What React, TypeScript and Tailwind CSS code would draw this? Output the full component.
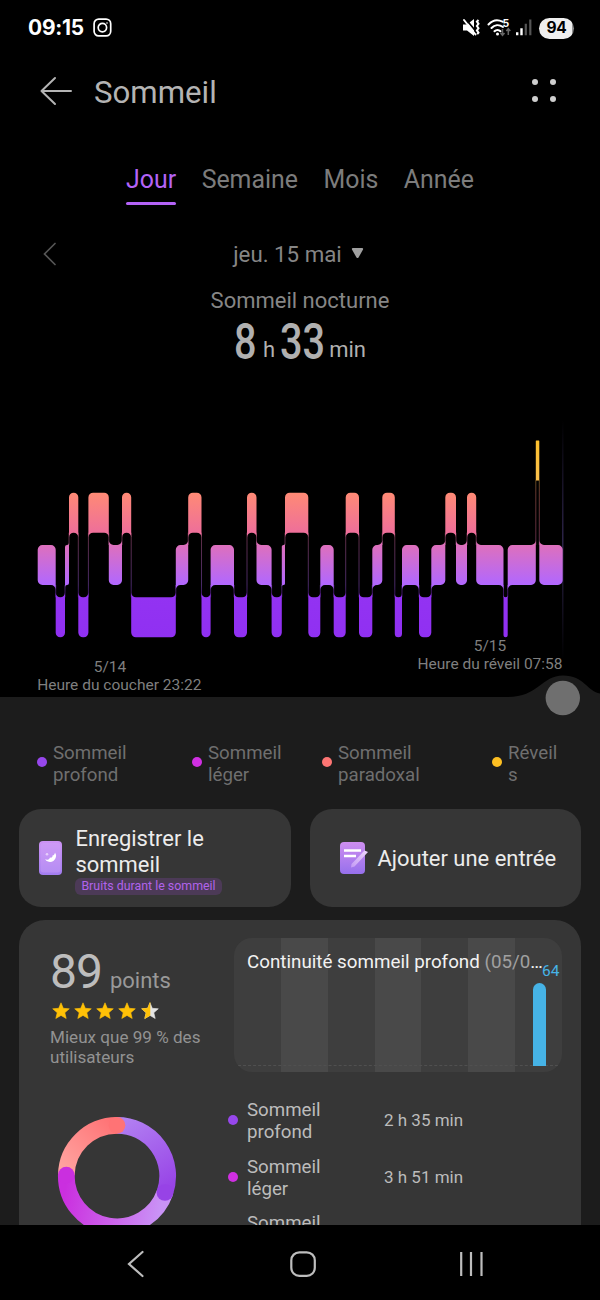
type Stage = "awake" | "rem" | "light" | "deep"

// Order matters: 0 is drawn highest
const LEVELS: Record<Stage, { rank: number; top: number }> = {
    awake: { rank: 0, top: 20.5 },
    rem: { rank: 1, top: 72.7 },
    light: { rank: 2, top: 125 },
    deep: { rank: 3, top: 177.3 },
}

const BLOCK_HEIGHT = 40

// [stage, x where the block ends]
const NIGHT: [Stage, number][] = [
    ["light", 55.7], ["deep", 65], ["light", 69], ["rem", 78.3], ["deep", 88.4],
    ["rem", 108.8], ["light", 122], ["rem", 131.2], ["deep", 175.8], ["light", 188.2],
    ["rem", 201.5], ["deep", 210.6], ["light", 234], ["deep", 247], ["rem", 256.5],
    ["light", 271.6], ["deep", 281.8], ["light", 285], ["rem", 308.3], ["deep", 320.3],
    ["light", 333.7], ["deep", 345.7], ["rem", 359], ["deep", 372.3], ["light", 382.3],
    ["rem", 394.8], ["deep", 402], ["light", 419], ["deep", 431.3], ["light", 445.3],
    ["rem", 456], ["light", 467], ["rem", 476.2], ["light", 503.5], ["deep", 507.7],
    ["light", 535.8], ["awake", 539.3], ["light", 562.7],
]

const NIGHT_START = 37.7

const TABS = ["Jour", "Semaine", "Mois", "Année"]

const LEGEND = [
    { lines: ["Sommeil", "profond"], dot: "bg-[#9747ec]" },
    { lines: ["Sommeil", "léger"], dot: "bg-[#d02fe2]" },
    { lines: ["Sommeil", "paradoxal"], dot: "bg-[#fd7573]" },
    { lines: ["Réveil", "s"], dot: "bg-[#fdbf22]" },
]

const DETAILS = [
    { lines: ["Sommeil", "profond"], dot: "bg-[#9747ec]", value: "2 h 35 min" },
    { lines: ["Sommeil", "léger"], dot: "bg-[#d02fe2]", value: "3 h 51 min" },
    { lines: ["Sommeil", "paradoxal"], dot: "bg-[#fd7573]", value: "2 h 7 min" },
]

function blockPath(x0: number, x1: number, stage: Stage, prev?: Stage, next?: Stage) {
    const { rank, top } = LEVELS[stage]
    const bottom = top + BLOCK_HEIGHT
    const r = stage === "awake" ? 0.5 : Math.min(4.7, (x1 - x0) / 2)
    const above = (s?: Stage) => s !== undefined && LEVELS[s].rank < rank
    const below = (s?: Stage) => s !== undefined && LEVELS[s].rank > rank
    // a corner that faces its neighbour flares out instead of rounding in
    const tl = above(prev) ? top - r : top + r
    const tr = above(next) ? top - r : top + r
    const bl = below(prev) ? bottom + r : bottom - r
    const br = below(next) ? bottom + r : bottom - r
    const corner = (x: number, y: number, flip: boolean) => `A${r} ${r} 0 0 ${flip ? 0 : 1} ${x} ${y}`
    return [
        `M${x0} ${tl}`,
        corner(x0 + r, top, above(prev)),
        `H${x1 - r}`,
        corner(x1, tr, above(next)),
        `V${br}`,
        corner(x1 - r, bottom, below(next)),
        `H${x0 + r}`,
        corner(x0, bl, below(prev)),
        "Z",
    ].join("")
}

function StatusBar() {
    return (
        <div className="flex h-14 items-center justify-between pl-[28px] pr-[26px] text-white">
            <div className="flex items-center gap-[9px]">
                <span className="font-['Inter'] text-[20.9px] font-bold tracking-[-0.2px]">09:15</span>
                <svg width="19" height="19" viewBox="0 0 19 19" fill="none" stroke="currentColor" strokeWidth="1.7">
                    <rect x="1.1" y="1.1" width="16.6" height="16.8" rx="4.6" />
                    <circle cx="9.4" cy="9.6" r="4.2" />
                    <circle cx="14" cy="5" r="0.8" fill="currentColor" stroke="none" />
                </svg>
            </div>
            <div className="flex items-center">
                <svg width="77" height="22" viewBox="0 0 77 22" fill="none">
                    {/* muted speaker, vibrating */}
                    <path d="M1 7.500h4l7-5.500v17l-7-5.500H1z" fill="#fff" />
                    <path d="M3.500 1.700l12 14.500" stroke="#000" strokeWidth="1.800" />
                    <path d="M2 3l11.500 14.500" stroke="#fff" strokeWidth="2" strokeLinecap="round" />
                    <path d="M16.500 3l-1.600 1.600 1.600 2.200-1.600 2.200 1.600 2.200-1.600 2.200 1.600 2.200-1.300 1.600" stroke="#fff" strokeWidth="2" />
                    {/* wifi */}
                    <path d="M26.500 7.500c4-4.300 9.500-5 14-2.800M29.500 11c3-3.300 7.500-3.700 11.500-1M32.500 14.300c1.700-1.800 4.200-1.800 6 0" stroke="#fff" strokeWidth="2" strokeLinecap="round" />
                    <circle cx="35.500" cy="17" r="1.500" fill="#fff" />
                    <text x="40.500" y="10" fill="#fff" fontSize="10.500" fontWeight="700" fontFamily="Inter">5</text>
                    <path d="M40.500 12v6M38.500 16l2 2.300 2-2.300M46.300 18v-6M44.300 14l2-2.300 2 2.300" stroke="#666" strokeWidth="1.500" />
                    {/* signal */}
                    <path d="M55.200 18.300v-3M59.500 18.300v-7" stroke="#fff" strokeWidth="2.400" />
                    <path d="M63.800 18.300v-11.500M68.300 18.300V2.500" stroke="#555" strokeWidth="2.200" />
                </svg>
                <div className="flex h-[21px] w-[35px] items-center justify-center rounded-full bg-[linear-gradient(90deg,#efefef_94%,#8f8f8f_94%)] font-['Inter'] text-[15.500px] font-bold tracking-[-0.300px] text-black">
                    94
                </div>
            </div>
        </div>
    )
}

function Header() {
    return (
        <header className="flex h-[72px] items-center pl-10 pr-11 text-[#b4b4b4]">
            <svg className="mb-0.5" width="33" height="30" viewBox="0 0 33 30" fill="none" stroke="currentColor" strokeWidth="2" strokeLinecap="round">
                <path d="M1.500 15H31M15 2L1.500 15L15 28" strokeLinejoin="round" />
            </svg>
            <h1 className="ml-[21px] mt-px text-[31.200px] leading-none">Sommeil</h1>
            <div className="ml-auto mb-[3px] grid grid-cols-2 gap-x-3 gap-y-[11px]">
                {[0, 1, 2, 3].map((i) => (
                    <span key={i} className="size-1.5 rounded-full bg-[#cfcfcf]" />
                ))}
            </div>
        </header>
    )
}

function Tabs() {
    return (
        <nav className="flex h-[77px] justify-center gap-[25.500px] pt-[37px] text-[24.900px] leading-[30px] text-[#7c7c7c]">
            {TABS.map((tab, i) => (
                <div key={tab} className={i === 0 ? "text-[#b463f7]" : ""}>
                    {tab}
                    {i === 0 && <div className="mt-[7px] h-[3px] rounded-full bg-[#b463f7]" />}
                </div>
            ))}
        </nav>
    )
}

function NightSummary() {
    return (
        <section className="flex h-[215px] flex-col items-center text-[#868686]">
            <div className="grid h-[97px] w-full grid-cols-[1fr_auto_1fr] items-center">
                <svg className="ml-[43px]" width="14" height="24" viewBox="0 0 14 24" fill="none" stroke="#555" strokeWidth="1.700" strokeLinecap="round">
                    <path d="M12 1.500L1.500 12L12 22.500" />
                </svg>
                <div className="mr-[3px] mt-0.5 flex items-center gap-[9px] text-[22.300px]">
                    jeu. 15 mai
                    <svg className="mb-[3px]" width="13" height="11" viewBox="0 0 13 11" fill="#a0a0a0">
                        <path d="M2 0h9q1.600 0 1 1.500L7.500 9.500q-1 1.200-2 0L1 1.500Q.4 0 2 0z" />
                    </svg>
                </div>
            </div>
            <p className="-mt-[15px] text-[22px] leading-7">Sommeil nocturne</p>
            <div className="-mt-px flex items-baseline text-[22px] leading-[56px] text-[#b0b0b0]">
                <span className="w-[23px] origin-left scale-x-[0.800] text-[49.500px] font-medium">8</span>
                <span className="mb-0.5 ml-[6px] mr-[5px] -translate-y-[2px]">h</span>
                <span className="w-[45px] origin-left scale-x-[0.800] text-[49.500px] font-medium">33</span>
                <span className="ml-[4px] -translate-y-[2px]">min</span>
            </div>
        </section>
    )
}

function SleepChart() {
    const blocks = NIGHT.map(([stage, end], i) => ({
        stage,
        end,
        start: i === 0 ? NIGHT_START : NIGHT[i - 1][1],
        prev: NIGHT[i - 1]?.[0],
        next: NIGHT[i + 1]?.[0],
    }))

    return (
        <svg className="relative z-10 block shrink-0 overflow-visible" width="600" height="277" viewBox="0 0 600 277">
            <defs>
                <linearGradient id="stages" gradientUnits="userSpaceOnUse" x1="0" y1="20" x2="0" y2="217">
                    <stop offset="0" stopColor="#fdc02c" />
                    <stop offset="0.200" stopColor="#fbc04c" />
                    <stop offset="0.268" stopColor="#ff8a75" />
                    <stop offset="0.470" stopColor="#ee6f9a" />
                    <stop offset="0.535" stopColor="#dd70bd" />
                    <stop offset="0.735" stopColor="#b167ff" />
                    <stop offset="0.780" stopColor="#9333f2" />
                    <stop offset="1" stopColor="#9030f2" />
                </linearGradient>
                <linearGradient id="cursor" x1="0" y1="0" x2="0" y2="1">
                    <stop offset="0" stopColor="#2c2348" stopOpacity="0" />
                    <stop offset="0.500" stopColor="#2c2348" />
                    <stop offset="1" stopColor="#2c2348" stopOpacity="0" />
                </linearGradient>
            </defs>

            <rect x="562" y="0" width="1.500" height="240" fill="url(#cursor)" />

            {blocks.slice(1).map((b) => {
                const a = LEVELS[b.prev].top
                const c = LEVELS[b.stage].top
                const y = Math.min(a, c) + BLOCK_HEIGHT
                return <rect key={b.start} x={b.start - 0.5} y={y} width="1" height={Math.max(a, c) - y} fill="url(#stages)" opacity="0.400" />
            })}
            {blocks.map((b) => (
                <path key={b.start} d={blockPath(b.start, b.end, b.stage, b.prev, b.next)} fill="url(#stages)" />
            ))}

            <g fill="#7f7f7f" fontSize="15.500" textAnchor="middle">
                <text x="110" y="251.500">5/14</text>
                <text x="119.300" y="270">Heure du coucher 23:22</text>
                <text x="490" y="230.500">5/15</text>
                <text x="490" y="249">Heure du réveil 07:58</text>
            </g>

            {/* sheet edge rising round the drag handle */}
            <path d="M508 277C538 277 542 255.500 563 255.500S588 272 600 273.500V278H508z" fill="#1c1c1c" />
            <circle cx="562.800" cy="278" r="17.200" fill="#6f6f6f" />
        </svg>
    )
}

function Legend() {
    return (
        <div className="grid h-[112px] grid-cols-[155px_130px_170px_auto] pl-[37px] pt-[44px] text-[18.700px] leading-[22px] text-[#6f6f6f]">
            {LEGEND.map((item) => (
                <div key={item.lines.join()} className="flex h-11 items-center gap-[6px]">
                    <span className={`mt-[-2px] size-2.5 rounded-full ${item.dot}`} />
                    <p className="mt-px">
                        {item.lines[0]}
                        <br />
                        {item.lines[1]}
                    </p>
                </div>
            ))}
        </div>
    )
}

function Actions() {
    return (
        <div className="grid h-[98px] grid-cols-2 gap-[19px] px-[19px] text-[21.950px] text-[#ececec]">
            <div className="flex items-center rounded-[22px] bg-[#363636] pl-5">
                <svg width="23" height="34" viewBox="0 0 23 34">
                    <defs>
                        <linearGradient id="phone" x1="0" y1="0" x2="0" y2="1">
                            <stop offset="0" stopColor="#cd93f4" />
                            <stop offset="1" stopColor="#a27df0" />
                        </linearGradient>
                    </defs>
                    <rect width="23" height="34" rx="4" fill="url(#phone)" />
                    <rect x="1.500" y="2" width="20" height="29.500" rx="3" fill="#d3aaf8" opacity="0.350" />
                    <path d="M16 11.500A6 6 0 1 1 6 18.300C8 19.300 10.300 18.800 11 16.500C12.500 17 13.800 16 13.500 14.500C15 14.300 15.800 13 16 11.500Z" fill="#fff" />
                    <circle cx="8" cy="13.300" r="1.300" fill="#efdcfd" opacity="0.800" />
                </svg>
                <div className="ml-[13px] mt-[4px]">
                    <p className="pl-[0.500px] leading-[26px]">
                        Enregistrer le
                        <br />
                        sommeil
                    </p>
                    <p className="flex h-[17px] w-[147px] items-center justify-center rounded-md bg-[#4c3a57] pt-px text-[12.400px] leading-none text-[#b163ea]">
                        Bruits durant le sommeil
                    </p>
                </div>
            </div>
            <div className="flex items-center rounded-[22px] bg-[#363636] pl-[30px]">
                <svg width="28" height="32" viewBox="0 0 28 32">
                    <defs>
                        <linearGradient id="note" x1="0" y1="0" x2="0" y2="1">
                            <stop offset="0" stopColor="#ce8ef0" />
                            <stop offset="1" stopColor="#9670ec" />
                        </linearGradient>
                        <linearGradient id="pen" x1="1" y1="0" x2="0" y2="1">
                            <stop offset="0" stopColor="#eed8fc" />
                            <stop offset="1" stopColor="#c39af5" />
                        </linearGradient>
                    </defs>
                    <rect width="25" height="32" rx="4" fill="url(#note)" />
                    <path d="M4 8.500h17M4 14h12" stroke="#fff" strokeWidth="2.300" />
                    <path d="M24.500 8.500l3.500 1.500L14.500 24.500l-3.500 1 .5-3.500z" fill="url(#pen)" />
                </svg>
                <p className="ml-[10px] mt-0.5 whitespace-nowrap">Ajouter une entrée</p>
            </div>
        </div>
    )
}

function Star({ half = false }: { half?: boolean }) {
    const d = "M9 .8l2.300 5.500 6 .5-4.500 3.900 1.400 5.800L9 13.400l-5.200 3.100 1.400-5.800L.7 6.800l6-.5z"
    return (
        <svg width="18" height="18" viewBox="0 0 18 18" strokeLinejoin="round" strokeWidth="0.600">
            <path d={d} fill={half ? "#e4e4e4" : "#ffc107"} stroke={half ? "#e4e4e4" : "#ffc107"} />
            {half && <path d="M9 .5v12.900l-5.200 3.100 1.400-5.800L.7 6.800l6-.5z" fill="#ffc107" stroke="#ffc107" />}
        </svg>
    )
}

function Continuity() {
    return (
        <div className="relative h-[134px] w-[328px] overflow-hidden rounded-[18px] bg-[#3e3e3e]">
            <div className="grid h-full grid-cols-7">
                {[0, 1, 2, 3, 4, 5, 6].map((i) => (
                    <div key={i} className={i % 2 ? "bg-[#494949]" : ""} />
                ))}
            </div>
            <div className="absolute inset-x-1 top-[127px] border-t border-dashed border-[#505050]" />
            <p className="absolute left-[13px] top-3 w-[296px] truncate text-[18.800px] leading-6 text-[#f2f2f2]">
                Continuité sommeil profond <span className="text-[#a0a0a0]">(05/09-05/15)</span>
            </p>
            <span className="absolute left-[308px] top-[23px] text-[15.500px] leading-5 text-[#46b3e6]">64</span>
            <div className="absolute left-[299px] top-[45px] h-[83px] w-[13px] rounded-t-full bg-[#46b3e6]" />
        </div>
    )
}

function Donut() {
    const r = 50.7
    const at = (deg: number) => {
        const a = (deg * Math.PI) / 180
        return [60 + r * Math.sin(a), 60 - r * Math.cos(a)]
    }
    const segments = [
        { from: 0, to: 109, grad: "donutDeep", end: "#9743e6" },
        { from: 109, to: 271, grad: "donutLight", end: "#ca2fdf" },
        { from: 271, to: 360, grad: "donutRem", end: "#ff7375" },
    ]
    return (
        <svg width="120" height="120" viewBox="0 0 120 120" fill="none">
            <defs>
                <linearGradient id="donutDeep" gradientUnits="userSpaceOnUse" x1="64" y1="6" x2="108" y2="76">
                    <stop stopColor="#b280f2" />
                    <stop offset="1" stopColor="#9743e6" />
                </linearGradient>
                <linearGradient id="donutLight" gradientUnits="userSpaceOnUse" x1="106" y1="80" x2="10" y2="62">
                    <stop stopColor="#c993f6" />
                    <stop offset="0.500" stopColor="#cc5fea" />
                    <stop offset="1" stopColor="#ca2fdf" />
                </linearGradient>
                <linearGradient id="donutRem" gradientUnits="userSpaceOnUse" x1="10" y1="55" x2="58" y2="8">
                    <stop stopColor="#ffa29f" />
                    <stop offset="1" stopColor="#ff7375" />
                </linearGradient>
            </defs>
            {segments.map((s) => {
                const [x0, y0] = at(s.from)
                const [x1, y1] = at(s.to)
                return <path key={s.grad} d={`M${x0} ${y0}A${r} ${r} 0 0 1 ${x1} ${y1}`} stroke={`url(#${s.grad})`} strokeWidth="16.700" />
            })}
            {segments.map((s) => {
                const [x, y] = at(s.to)
                return <circle key={s.grad} cx={x} cy={y} r="8.350" fill={s.end} />
            })}
        </svg>
    )
}

function ScoreCard() {
    return (
        <section className="mx-[19px] mt-[13px] h-[420px] rounded-[26px] bg-[#363636] pt-[18px]">
            <div className="flex h-[134px]">
                <div className="w-[215px] pl-[31px]">
                    <div className="flex h-[64px] items-baseline text-[#bdbdbd]">
                        <span className="text-[48px] leading-[67px] tracking-[-1px]">89</span>
                        <span className="ml-[8px] text-[22px] text-[#999]">points</span>
                    </div>
                    <div className="ml-[1.500px] flex gap-[4.300px]">
                        <Star />
                        <Star />
                        <Star />
                        <Star />
                        <Star half />
                    </div>
                    <p className="mt-[7px] whitespace-nowrap text-[17.100px] leading-5 text-[#929292]">
                        Mieux que 99 % des
                        <br />
                        utilisateurs
                    </p>
                </div>
                <Continuity />
            </div>
            <div className="mt-[26px] flex">
                <div className="w-[209px] pl-[38px] pt-[18px]">
                    <Donut />
                </div>
                <div className="flex flex-col gap-3 text-[#bcbcbc]">
                    {DETAILS.map((row) => (
                        <div key={row.value} className="flex h-[44.700px] items-center">
                            <span className={`-mt-px size-2.5 rounded-full ${row.dot}`} />
                            <p className="ml-[9px] mt-px w-[137px] text-[18.700px] leading-[22px]">
                                {row.lines[0]}
                                <br />
                                {row.lines[1]}
                            </p>
                            <span className="mt-px text-[17px]">{row.value}</span>
                        </div>
                    ))}
                </div>
            </div>
        </section>
    )
}

function NavBar() {
    return (
        <div className="flex h-[75px] shrink-0 items-center bg-black pl-[126px] pt-[3px] text-[#bdbdbd]">
            <svg width="360" height="28" viewBox="0 0 360 28" fill="none" stroke="currentColor" strokeWidth="2.200">
                <path d="M16.500 2L3 14L16.500 26" strokeLinecap="round" />
                <rect x="165.300" y="2.300" width="23.500" height="23.500" rx="8" />
                <path d="M335.200 2v24M345 2v24M355.500 2v24" />
            </svg>
        </div>
    )
}

export default function App() {
    return (
        <div className="flex h-[1300px] w-[600px] flex-col overflow-hidden bg-black font-['Roboto',sans-serif]">
            <StatusBar />
            <Header />
            <Tabs />
            <NightSummary />
            <SleepChart />
            <main className="h-[528px] shrink-0 overflow-hidden bg-[#1c1c1c]">
                <Legend />
                <Actions />
                <ScoreCard />
            </main>
            <NavBar />
        </div>
    )
}
